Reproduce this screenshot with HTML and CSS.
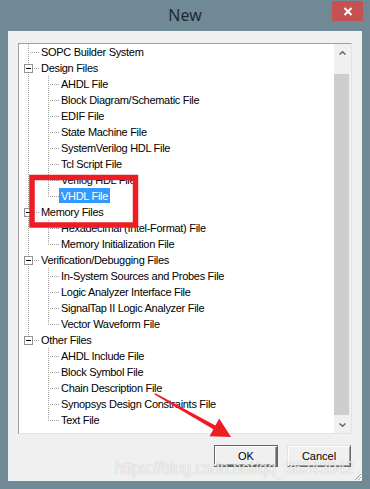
FILE: index.html
```html
<!DOCTYPE html>
<html lang="en">
<head>
    <meta charset="UTF-8">
    <title>New</title>
    <link rel="stylesheet" href="styles.css">
</head>
<body>
    <div class="window">
        <div class="titlebar">
            <span class="title">New</span>
            <div class="close">
                <svg width="10" height="9" viewBox="0 0 10 9"><path d="M1.5 1 L8.5 8 M8.5 1 L1.5 8" stroke="#fff" stroke-width="2" fill="none"/></svg>
            </div>
        </div>

        <div class="client">
            <div class="tree">
                <div class="items">
                    <div class="row"><i class="cell tee"></i><span class="label">SOPC Builder System</span></div>
                    <div class="row"><i class="cell tee"><b class="box"></b></i><span class="label">Design Files</span></div>
                    <div class="row"><i class="cell pipe"></i><i class="cell tee"></i><span class="label">AHDL File</span></div>
                    <div class="row"><i class="cell pipe"></i><i class="cell tee"></i><span class="label">Block Diagram/Schematic File</span></div>
                    <div class="row"><i class="cell pipe"></i><i class="cell tee"></i><span class="label">EDIF File</span></div>
                    <div class="row"><i class="cell pipe"></i><i class="cell tee"></i><span class="label">State Machine File</span></div>
                    <div class="row"><i class="cell pipe"></i><i class="cell tee"></i><span class="label">SystemVerilog HDL File</span></div>
                    <div class="row"><i class="cell pipe"></i><i class="cell tee"></i><span class="label">Tcl Script File</span></div>
                    <div class="row"><i class="cell pipe"></i><i class="cell tee"></i><span class="label">Verilog HDL File</span></div>
                    <div class="row"><i class="cell pipe"></i><i class="cell end"></i><span class="label selected">VHDL File</span></div>
                    <div class="row"><i class="cell tee"><b class="box"></b></i><span class="label">Memory Files</span></div>
                    <div class="row"><i class="cell pipe"></i><i class="cell tee"></i><span class="label">Hexadecimal (Intel-Format) File</span></div>
                    <div class="row"><i class="cell pipe"></i><i class="cell end"></i><span class="label">Memory Initialization File</span></div>
                    <div class="row"><i class="cell tee"><b class="box"></b></i><span class="label">Verification/Debugging Files</span></div>
                    <div class="row"><i class="cell pipe"></i><i class="cell tee"></i><span class="label">In-System Sources and Probes File</span></div>
                    <div class="row"><i class="cell pipe"></i><i class="cell tee"></i><span class="label">Logic Analyzer Interface File</span></div>
                    <div class="row"><i class="cell pipe"></i><i class="cell tee"></i><span class="label">SignalTap II Logic Analyzer File</span></div>
                    <div class="row"><i class="cell pipe"></i><i class="cell end"></i><span class="label">Vector Waveform File</span></div>
                    <div class="row"><i class="cell end"><b class="box"></b></i><span class="label">Other Files</span></div>
                    <div class="row"><i class="cell"></i><i class="cell tee"></i><span class="label">AHDL Include File</span></div>
                    <div class="row"><i class="cell"></i><i class="cell tee"></i><span class="label">Block Symbol File</span></div>
                    <div class="row"><i class="cell"></i><i class="cell tee"></i><span class="label">Chain Description File</span></div>
                    <div class="row"><i class="cell"></i><i class="cell tee"></i><span class="label">Synopsys Design Constraints File</span></div>
                    <div class="row"><i class="cell"></i><i class="cell end"></i><span class="label">Text File</span></div>
                </div>
                <div class="scrollbar">
                    <div class="sb-btn">
                        <svg width="7" height="4" viewBox="0 0 7 4"><path d="M0.5 3.5 L3.5 0.8 L6.5 3.5" stroke="#606060" stroke-width="1.4" fill="none"/></svg>
                    </div>
                    <div class="sb-track"><div class="sb-thumb"></div></div>
                    <div class="sb-btn">
                        <svg width="7" height="4" viewBox="0 0 7 4"><path d="M0.5 0.5 L3.5 3.2 L6.5 0.5" stroke="#606060" stroke-width="1.4" fill="none"/></svg>
                    </div>
                </div>
            </div>

            <div class="buttons">
                <button class="btn default">OK</button>
                <button class="btn">Cancel</button>
            </div>

            <div class="grip">
                <svg width="8" height="8" viewBox="0 0 8 8">
                    <path d="M7 1 L1 7 M7 4 L4 7 M7 7 L7 7" stroke="#a0a0a0" stroke-width="1" fill="none"/>
                    <path d="M8 2 L2 8 M8 5 L5 8" stroke="#fff" stroke-width="1" fill="none"/>
                </svg>
            </div>
        </div>

        <div class="watermark">https://blog.csdn.net/qq_36243942</div>

        <!-- red annotation drawn over the dialog -->
        <svg class="annot" width="370" height="489" viewBox="0 0 370 489">
            <rect x="32" y="177.5" width="103.5" height="47.5" fill="none" stroke="#ee1c25" stroke-width="5.5"/>
            <polygon points="155,393 215.4,425.6 219.2,418.6 231,437 209.6,436.2 213.4,429.2 154.5,394.6" fill="#ee1c25"/>
        </svg>
    </div>
</body>
</html>
```

FILE: styles.css
```css
body {
    margin: 0;
    font-family: 'Liberation Sans', Arial, sans-serif;
}

.window {
    position: relative;
    width: 370px;
    height: 489px;
    background-color: #708996;
    display: flex;
    flex-direction: column;
}

.titlebar {
    height: 31px;
    display: grid;
    grid-template-columns: 1fr auto 1fr;
    padding: 0 7px;
}

.title {
    grid-column: 2;
    font-family: 'Noto Sans', 'Open Sans', sans-serif;
    font-size: 16px;
    line-height: 30px;
    color: #222a2e;
}

.close {
    grid-column: 3;
    justify-self: end;
    margin-top: 1px;
    width: 31px;
    height: 20px;
    background-color: #c75050;
    display: flex;
    align-items: center;
    justify-content: center;
}

.client {
    flex: 1;
    margin: 0 8px 8px;
    background-color: #f0f0f0;
    padding: 12px 0 0 10px;
    display: flex;
    flex-direction: column;
}

.tree {
    width: 334px;
    height: 391px;
    box-sizing: border-box;
    border: 1px solid;
    border-color: #a0a0a0 #e3e3e3 #e3e3e3 #a0a0a0;
    background-color: #fff;
    display: flex;
}

.items {
    flex: 1;
    overflow: hidden;
}

.row {
    height: 16px;
    display: flex;
    white-space: nowrap;
}

.cell {
    flex: none;
    width: 20px;
    height: 16px;
}

.pipe {
    background: repeating-linear-gradient(#a0a0a0 0 1px, transparent 1px 2px) 9px 0 / 1px 16px no-repeat;
}

.tee {
    background:
        repeating-linear-gradient(90deg, #a0a0a0 0 1px, transparent 1px 2px) 11px 8px / 9px 1px no-repeat,
        repeating-linear-gradient(#a0a0a0 0 1px, transparent 1px 2px) 9px 0 / 1px 16px no-repeat;
}

.end {
    background:
        repeating-linear-gradient(90deg, #a0a0a0 0 1px, transparent 1px 2px) 11px 8px / 9px 1px no-repeat,
        repeating-linear-gradient(#a0a0a0 0 1px, transparent 1px 2px) 9px 0 / 1px 9px no-repeat;
}

.box {
    display: block;
    width: 9px;
    height: 9px;
    box-sizing: border-box;
    margin: 4px 0 0 5px;
    border: 1px solid #919191;
    background: linear-gradient(#000, #000) center / 5px 1px no-repeat, #fff;
}

.label {
    margin-top: 1px;
    padding: 0 2px;
    height: 15px;
    line-height: 15px;
    font-size: 11px;
    letter-spacing: -0.3px;
    color: #000;
}

.label.selected {
    margin-top: 0;
    line-height: 16px;
    background-color: #3399ff;
    color: #fff;
}

.scrollbar {
    width: 17px;
    background-color: #f0f0f0;
    display: flex;
    flex-direction: column;
}

.sb-btn {
    height: 17px;
    display: flex;
    align-items: center;
    justify-content: center;
}

.sb-track {
    flex: 1;
    padding: 13px 2px 1px 0;
    display: flex;
}

.sb-thumb {
    flex: 1;
    background-color: #cdcdcd;
}

.buttons {
    display: flex;
    justify-content: flex-end;
    gap: 9px;
    margin: 11px 11px 0 0;
}

.btn {
    width: 64px;
    height: 22px;
    padding: 0;
    font-family: 'Liberation Sans', Arial, sans-serif;
    font-size: 11px;
    color: #000;
    background-color: #f0f0f0;
    border: 1px solid;
    border-color: #e3e3e3 #696969 #696969 #e3e3e3;
    box-shadow: inset 1px 1px #fff, inset -1px -1px #a0a0a0;
}

.btn.default {
    border-color: #646464;
    box-shadow: inset 1px 1px #fff, inset -1px -1px #696969, inset -2px -2px #a0a0a0;
}

.grip {
    margin-top: auto;
    align-self: flex-end;
    width: 8px;
    height: 8px;
    line-height: 0;
}

.watermark {
    position: absolute;
    left: 115px;
    top: 457px;
    font-family: 'Liberation Sans', Arial, sans-serif;
    font-size: 19px;
    white-space: nowrap;
    color: rgba(255, 255, 255, 0.85);
    text-shadow: 0 0 1px rgba(0, 0, 0, 0.3);
    transform: scaleX(0.82);
    transform-origin: left top;
}

.annot {
    position: absolute;
    left: 0;
    top: 0;
    pointer-events: none;
}
```
